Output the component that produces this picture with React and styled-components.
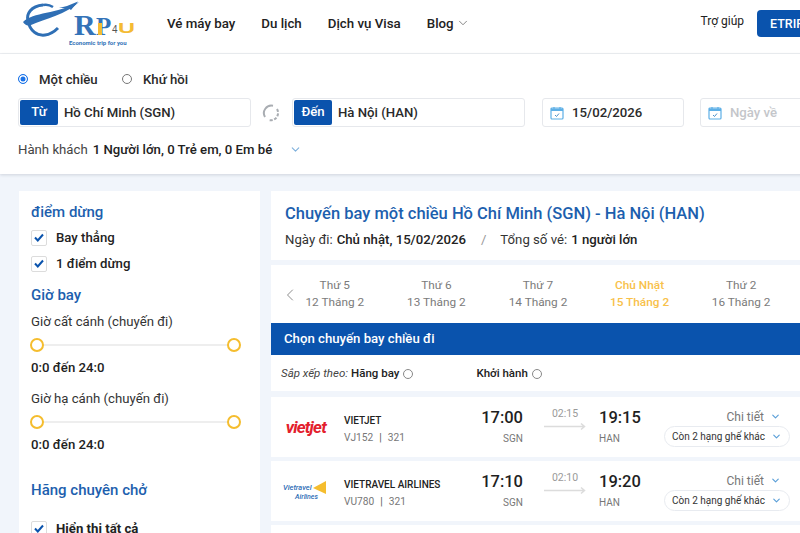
import React from 'react';
import styled, { createGlobalStyle } from 'styled-components';
import { ChevronDown, ChevronLeft } from 'lucide-react';

const GlobalStyle = createGlobalStyle`
  html, body {
    margin: 0;
    padding: 0;
    background: #f1f5fb;
    overflow: hidden;
  }
  * { box-sizing: border-box; }
`;

const Page = styled.div`
  width: 800px;
  height: 533px;
  overflow: hidden;
  font-family: Roboto, "Noto Sans", sans-serif;
  color: #1c1c1c;
  background: #f1f5fb;
`;

const Header = styled.header`
  display: flex;
  align-items: center;
  width: 857px;
  height: 54px;
  padding-left: 23px;
  background: #fff;
  border-bottom: 1px solid #eef0f3;
`;

const NavList = styled.nav`
  display: flex;
  align-items: center;
  gap: 26px;
  margin-left: 30px;
  margin-bottom: 7px;
`;

const NavItem = styled.span`
  display: flex;
  align-items: center;
  gap: 2px;
  font-size: 13.3px;
  font-weight: 500;
  white-space: nowrap;
  color: #222;
`;

const HeaderRight = styled.div`
  display: flex;
  align-items: center;
  gap: 13px;
  margin-left: auto;
  margin-bottom: 6px;
`;

const HelpLink = styled.span`
  font-size: 12px;
  color: #222;
  white-space: nowrap;
  margin-bottom: 5px;
`;

const AccountButton = styled.span`
  display: block;
  width: 100px;
  height: 27px;
  padding-left: 13px;
  border-radius: 4px;
  background: #0a53ad;
  color: #fff;
  font-size: 12.5px;
  font-weight: 500;
  line-height: 27px;
`;

const SearchPanel = styled.section`
  width: 860px;
  height: 120px;
  padding: 17px 0 0 18px;
  background: #fff;
  box-shadow: 0 1px 3px rgba(30, 40, 60, 0.16);
`;

const TripRow = styled.div`
  display: flex;
  align-items: center;
  height: 16px;
  font-size: 13.2px;
  font-weight: 500;
`;

const TripOption = styled.label`
  display: flex;
  align-items: center;
  gap: 11px;
  width: ${(p) => p.$width}px;
  color: #2a2a2a;
`;

const TripRadio = styled.span`
  width: 10px;
  height: 10px;
  border-radius: 50%;
  border: 1px solid ${(p) => (p.$on ? '#1a73e8' : '#777')};
  background: ${(p) => (p.$on ? '#1a73e8' : '#fff')};
  box-shadow: ${(p) => (p.$on ? 'inset 0 0 0 1.5px #fff' : 'none')};
`;

const FieldRow = styled.div`
  display: flex;
  align-items: center;
  margin-top: 11px;
`;

const PlaceField = styled.div`
  display: flex;
  align-items: center;
  width: 233px;
  height: 29px;
  padding-left: 1px;
  border: 1px solid #e6e8ec;
  border-radius: 3px;
  font-size: 13.2px;
  font-weight: 500;
  color: #2a2a2a;
`;

const PlaceTag = styled.span`
  width: 38px;
  height: 25px;
  margin-right: 6px;
  border-radius: 2px;
  background: #0a53ad;
  color: #fff;
  text-align: center;
  font-size: 13.2px;
  font-weight: 500;
  line-height: 24px;
`;

const SwapBox = styled.div`
  display: flex;
  justify-content: center;
  width: 41px;
  padding-right: 2px;
`;

const DateField = styled.div`
  display: flex;
  align-items: center;
  gap: 8px;
  width: 142px;
  height: 29px;
  margin-left: ${(p) => p.$gap}px;
  padding-left: 7px;
  border: 1px solid #e6e8ec;
  border-radius: 3px;
  font-size: 13.2px;
  font-weight: 500;
  color: ${(p) => (p.$empty ? '#c4c6ca' : '#2a2a2a')};
`;

const PassengerRow = styled.div`
  display: flex;
  align-items: center;
  margin-top: 15px;
  font-size: 13.2px;
  color: #444;
`;

const PassengerValue = styled.strong`
  margin-left: 5px;
  font-weight: 500;
  color: #222;
`;

const PassengerChevron = styled.span`
  display: flex;
  margin-left: 17px;
  color: #7fb0dc;
`;

const Content = styled.div`
  display: flex;
  align-items: flex-start;
  gap: 11px;
  width: 860px;
  padding: 17px 0 0 19px;
`;

const Sidebar = styled.aside`
  width: 241px;
  height: 360px;
  padding: 12px 12px 0;
  background: #fff;
`;

const FilterTitle = styled.h3`
  margin: ${(p) => p.$top || 0}px 0 0;
  font-size: 15px;
  line-height: 18px;
  font-weight: 500;
  color: #1d5fae;
`;

const CheckRow = styled.label`
  display: flex;
  align-items: center;
  gap: 9px;
  height: 17px;
  margin-top: ${(p) => p.$top}px;
  font-size: 13.2px;
  font-weight: ${(p) => (p.$bold ? 700 : 500)};
  color: #222;
`;

const CheckMark = styled.span`
  display: flex;
  align-items: center;
  justify-content: center;
  width: 16px;
  height: 16px;
  border: 1px solid #dcdcdc;
  border-radius: 2px;
  background: #fff;
`;

const SliderLabel = styled.div`
  margin-top: ${(p) => p.$top}px;
  font-size: 13.2px;
  line-height: 17px;
  color: #333;
`;

const SliderTrack = styled.div`
  display: flex;
  align-items: center;
  justify-content: space-between;
  width: 211px;
  height: 14px;
  margin: 8px 0 0 -1px;
  background: linear-gradient(#eeeeee, #eeeeee) center / 100% 2px no-repeat;
`;

const SliderThumb = styled.span`
  width: 14px;
  height: 14px;
  border-radius: 50%;
  border: 2px solid #f5bd2e;
  background: #fff;
`;

const SliderValue = styled.div`
  margin-top: 7px;
  font-size: 13.2px;
  line-height: 17px;
  font-weight: 500;
  color: #222;
`;

const Results = styled.main`
  display: flex;
  flex-direction: column;
  width: 529px;
`;

const TitleCard = styled.div`
  height: 69px;
  padding: 12px 14px 0;
  background: #fff;
`;

const RouteTitle = styled.h1`
  margin: 0;
  font-size: 16.5px;
  line-height: 21px;
  font-weight: 500;
  color: #1d5fae;
`;

const RouteMeta = styled.div`
  display: flex;
  align-items: center;
  margin-top: 7px;
  font-size: 13.2px;
  line-height: 17px;
  color: #333;

  strong {
    margin-left: 4px;
    font-weight: 500;
    color: #222;
  }
`;

const MetaSlash = styled.span`
  margin: 0 14px 0 15px;
  color: #999;
`;

const DateStrip = styled.div`
  display: flex;
  align-items: center;
  height: 58px;
  margin-top: 5px;
  padding-left: 13px;
  background: #fff;
  color: #777;
`;

const DateBack = styled.span`
  display: flex;
  flex: none;
  width: 0;
  margin-top: 1px;
  color: #777;

  svg { margin-left: -4px; flex: none; }
`;

const DateCell = styled.div`
  flex: none;
  width: 101.6px;
  font-size: 11.8px;
  line-height: 17px;
  text-align: center;
  color: ${(p) => (p.$active ? '#f8c14a' : '#7b7b7b')};
  font-weight: ${(p) => (p.$active ? 500 : 400)};
`;

const SelectBar = styled.div`
  height: 32px;
  padding-left: 13px;
  background: #0a53ad;
  color: #fff;
  font-size: 13.2px;
  font-weight: 500;
  line-height: 31px;
`;

const SortRow = styled.div`
  display: flex;
  align-items: center;
  height: 36px;
  padding-left: 10px;
  background: #fff;
  font-size: 11.5px;
  font-weight: 500;
  color: #222;
`;

const SortLabel = styled.em`
  margin-right: 3px;
  font-weight: 400;
  color: #444;
`;

const SortRadio = styled.span`
  width: 10px;
  height: 10px;
  margin: 1px 0 0 4px;
  border: 1px solid #888;
  border-radius: 50%;
`;

const SortSpacer = styled.span`
  width: 63px;
`;

const FlightCard = styled.article`
  display: flex;
  align-items: center;
  height: 60px;
  margin-top: ${(p) => p.$top}px;
  padding-left: 12px;
  background: #fff;
`;

const AirlineLogo = styled.div`
  display: flex;
  align-items: center;
  justify-content: flex-end;
  width: 43px;
`;

const VietjetMark = styled.span`
  font-size: 17px;
  font-weight: 700;
  font-style: italic;
  letter-spacing: -0.8px;
  color: #e3202c;
`;

const AirlineInfo = styled.div`
  width: 135px;
  margin: 4px 0 0 18px;
`;

const AirlineName = styled.div`
  font-size: 10px;
  line-height: 14px;
  font-weight: 500;
  color: #222;
`;

const AirlineCode = styled.div`
  margin-top: 3px;
  font-size: 10.2px;
  line-height: 14px;
  color: #777;

  i {
    margin: 0 6px;
    font-style: normal;
    color: #555;
  }
`;

const TimeBlock = styled.div`
  width: 44px;
  text-align: ${(p) => p.$align};
`;

const TimeValue = styled.div`
  font-size: 16.5px;
  line-height: 20px;
  font-weight: 500;
  color: #1f1f1f;
`;

const AirportCode = styled.div`
  margin-top: 4px;
  font-size: 10px;
  line-height: 14px;
  color: #777;
`;

const Duration = styled.div`
  display: flex;
  flex-direction: column;
  align-items: center;
  gap: 2px;
  width: 76px;
  margin-bottom: 17px;
  padding-left: 8px;
  font-size: 10.5px;
  color: #9a9a9a;
`;

const Actions = styled.div`
  display: flex;
  flex-direction: column;
  align-items: flex-end;
  width: 126px;
  margin-left: 21px;
`;

const DetailLink = styled.div`
  display: flex;
  align-items: center;
  gap: 6px;
  margin: 2px 9px 0 0;
  font-size: 12px;
  line-height: 14px;
  color: #777;
  svg { color: #5a9fd8; }
`;

const ClassPill = styled.div`
  display: flex;
  align-items: center;
  justify-content: center;
  gap: 6px;
  width: 126px;
  height: 21px;
  margin-top: 2px;
  border: 1px solid #e8ebf0;
  border-radius: 11px;
  font-size: 10px;
  color: #333;
  white-space: nowrap;
  svg { color: #5a9fd8; }
`;

const LogoMark = () => (
  <svg width="114" height="54" viewBox="0 0 114 54">
    <path d="M0 22 C10 12 34 14 56 2 C44 14 22 19 8 25 C4 26 2 25 0 22 Z" fill="#2f6fb5" />
    <path d="M20 5 C8 6 3 14 5 21 C7 31 14 36 22 35 C27 34.5 31 32 35 28" fill="none" stroke="#2f6fb5" strokeWidth="3" />
    <path d="M20 5 C24 4 27 5 30 7" fill="none" stroke="#2f6fb5" strokeWidth="2.5" />
    <path d="M55 1.5 L48 10 L45 8 L36 8 L44 6 Z" fill="#2f6fb5" />
    <text x="51" y="35" fontFamily="Liberation Serif, serif" fontSize="30" fontWeight="700" fill="#3473b8">R</text>
    <text x="73" y="35" fontFamily="Liberation Serif, serif" fontSize="25" fontWeight="700" fill="#3473b8">P</text>
    <rect x="75" y="23" width="4" height="12" fill="#f4bb33" />
    <text x="89" y="33" fontFamily="Liberation Sans, sans-serif" fontSize="10" fill="#555">4</text>
    <text x="95" y="33" fontFamily="Liberation Sans, sans-serif" fontSize="15" fontWeight="700" fill="#f4bb33" textLength="17" lengthAdjust="spacingAndGlyphs">U</text>
    <text x="46" y="45" fontFamily="Roboto, sans-serif" fontSize="6" fontWeight="700" fill="#3473b8">Economic trip for you</text>
  </svg>
);

const SwapIcon = () => (
  <svg width="18" height="18" viewBox="0 0 18 18" fill="none" stroke="#a9adb2" strokeWidth="2">
    <path d="M3 13 A7.5 7.5 0 0 1 11 1.8" />
    <path d="M15 5 A7.5 7.5 0 0 1 7 16.2" strokeDasharray="3 1.5" />
  </svg>
);

const CalendarIcon = () => (
  <svg width="14" height="14" viewBox="0 0 14 14" fill="none">
    <rect x="1" y="2" width="12" height="11" rx="1" stroke="#5dafe6" strokeWidth="1.2" />
    <path d="M1 2.5 H13 V5 H1 Z" fill="#5dafe6" />
    <path d="M4 1 V3 M10 1 V3" stroke="#5dafe6" strokeWidth="1.2" />
    <path d="M5 9 L6.5 10.5 L9 7.5" stroke="#4a90c8" strokeWidth="1" />
  </svg>
);

const Tick = () => (
  <svg width="10" height="9" viewBox="0 0 10 9" fill="none">
    <path d="M1 4.5 L3.8 7.5 L9 1.5" stroke="#0a53ad" strokeWidth="2" />
  </svg>
);

const FlightArrow = () => (
  <svg width="42" height="9" viewBox="0 0 42 9" fill="none" stroke="#dcdcdc" strokeWidth="1.5">
    <path d="M0 4.5 H40 M37 1.5 L40.5 4.5 L37 7.5" />
  </svg>
);

const VietravelMark = () => (
  <svg width="43" height="22" viewBox="0 0 43 22">
    <path d="M43 1 V14 L30 8 Z" fill="#f5bd2e" />
    <text x="0" y="10" fontFamily="Roboto, sans-serif" fontSize="7.5" fontStyle="italic" fontWeight="500" fill="#2c6cb5">Vietravel</text>
    <text x="12" y="19" fontFamily="Roboto, sans-serif" fontSize="7" fontStyle="italic" fontWeight="500" fill="#2c6cb5">Airlines</text>
  </svg>
);

const DATES = [
  { day: 'Thứ 5', date: '12 Tháng 2' },
  { day: 'Thứ 6', date: '13 Tháng 2' },
  { day: 'Thứ 7', date: '14 Tháng 2' },
  { day: 'Chủ Nhật', date: '15 Tháng 2', active: true },
  { day: 'Thứ 2', date: '16 Tháng 2' },
];

const FLIGHTS = [
  { name: 'VIETJET', code: 'VJ152', from: '17:00', to: '19:15', span: '02:15', logo: <VietjetMark>vietjet</VietjetMark>, top: 6 },
  { name: 'VIETRAVEL AIRLINES', code: 'VU780', from: '17:10', to: '19:20', span: '02:10', logo: <VietravelMark />, top: 4 },
];

const Slider = ({ label, top }) => (
  <>
    <SliderLabel $top={top}>{label}</SliderLabel>
    <SliderTrack>
      <SliderThumb />
      <SliderThumb />
    </SliderTrack>
    <SliderValue>0:0 đến 24:0</SliderValue>
  </>
);

const App = () => (
  <Page>
    <GlobalStyle />
    <Header>
      <LogoMark />
      <NavList>
        <NavItem>Vé máy bay</NavItem>
        <NavItem>Du lịch</NavItem>
        <NavItem>Dịch vụ Visa</NavItem>
        <NavItem>
          Blog
          <ChevronDown size={14} strokeWidth={1.2} color="#555" />
        </NavItem>
      </NavList>
      <HeaderRight>
        <HelpLink>Trợ giúp</HelpLink>
        <AccountButton>ETRIP4U</AccountButton>
      </HeaderRight>
    </Header>

    <SearchPanel>
      <TripRow>
        <TripOption $width={104}>
          <TripRadio $on />
          Một chiều
        </TripOption>
        <TripOption $width={90}>
          <TripRadio />
          Khứ hồi
        </TripOption>
      </TripRow>
      <FieldRow>
        <PlaceField>
          <PlaceTag>Từ</PlaceTag>
          Hồ Chí Minh (SGN)
        </PlaceField>
        <SwapBox>
          <SwapIcon />
        </SwapBox>
        <PlaceField>
          <PlaceTag>Đến</PlaceTag>
          Hà Nội (HAN)
        </PlaceField>
        <DateField $gap={17}>
          <CalendarIcon />
          15/02/2026
        </DateField>
        <DateField $gap={16} $empty>
          <CalendarIcon />
          Ngày về
        </DateField>
      </FieldRow>
      <PassengerRow>
        Hành khách
        <PassengerValue>1 Người lớn, 0 Trẻ em, 0 Em bé</PassengerValue>
        <PassengerChevron>
          <ChevronDown size={13} />
        </PassengerChevron>
      </PassengerRow>
    </SearchPanel>

    <Content>
      <Sidebar>
        <FilterTitle>điểm dừng</FilterTitle>
        <CheckRow $top={8}>
          <CheckMark><Tick /></CheckMark>
          Bay thẳng
        </CheckRow>
        <CheckRow $top={9}>
          <CheckMark><Tick /></CheckMark>
          1 điểm dừng
        </CheckRow>
        <FilterTitle $top={14}>Giờ bay</FilterTitle>
        <Slider label="Giờ cất cánh (chuyến đi)" top={9} />
        <Slider label="Giờ hạ cánh (chuyến đi)" top={14} />
        <FilterTitle $top={28}>Hãng chuyên chở</FilterTitle>
        <CheckRow $top={21} $bold>
          <CheckMark><Tick /></CheckMark>
          Hiển thị tất cả
        </CheckRow>
      </Sidebar>

      <Results>
        <TitleCard>
          <RouteTitle>Chuyến bay một chiều Hồ Chí Minh (SGN) - Hà Nội (HAN)</RouteTitle>
          <RouteMeta>
            Ngày đi:
            <strong>Chủ nhật, 15/02/2026</strong>
            <MetaSlash>/</MetaSlash>
            Tổng số vé:
            <strong>1 người lớn</strong>
          </RouteMeta>
        </TitleCard>

        <DateStrip>
          <DateBack><ChevronLeft size={20} strokeWidth={1} /></DateBack>
          {DATES.map((item) => (
            <DateCell key={item.date} $active={item.active}>
              <div>{item.day}</div>
              <div>{item.date}</div>
            </DateCell>
          ))}
        </DateStrip>

        <SelectBar>Chọn chuyến bay chiều đi</SelectBar>

        <SortRow>
          <SortLabel>Sắp xếp theo:</SortLabel>
          Hãng bay
          <SortRadio />
          <SortSpacer />
          Khởi hành
          <SortRadio />
        </SortRow>

        {FLIGHTS.map((flight) => (
          <FlightCard key={flight.code} $top={flight.top}>
            <AirlineLogo>{flight.logo}</AirlineLogo>
            <AirlineInfo>
              <AirlineName>{flight.name}</AirlineName>
              <AirlineCode>{flight.code}<i>|</i>321</AirlineCode>
            </AirlineInfo>
            <TimeBlock $align="right">
              <TimeValue>{flight.from}</TimeValue>
              <AirportCode>SGN</AirportCode>
            </TimeBlock>
            <Duration>
              {flight.span}
              <FlightArrow />
            </Duration>
            <TimeBlock $align="left">
              <TimeValue>{flight.to}</TimeValue>
              <AirportCode>HAN</AirportCode>
            </TimeBlock>
            <Actions>
              <DetailLink>
                Chi tiết
                <ChevronDown size={11} strokeWidth={2.5} />
              </DetailLink>
              <ClassPill>
                Còn 2 hạng ghế khác
                <ChevronDown size={11} strokeWidth={2.5} />
              </ClassPill>
            </Actions>
          </FlightCard>
        ))}
        <FlightCard $top={4} />
      </Results>
    </Content>
  </Page>
);

export default App;
